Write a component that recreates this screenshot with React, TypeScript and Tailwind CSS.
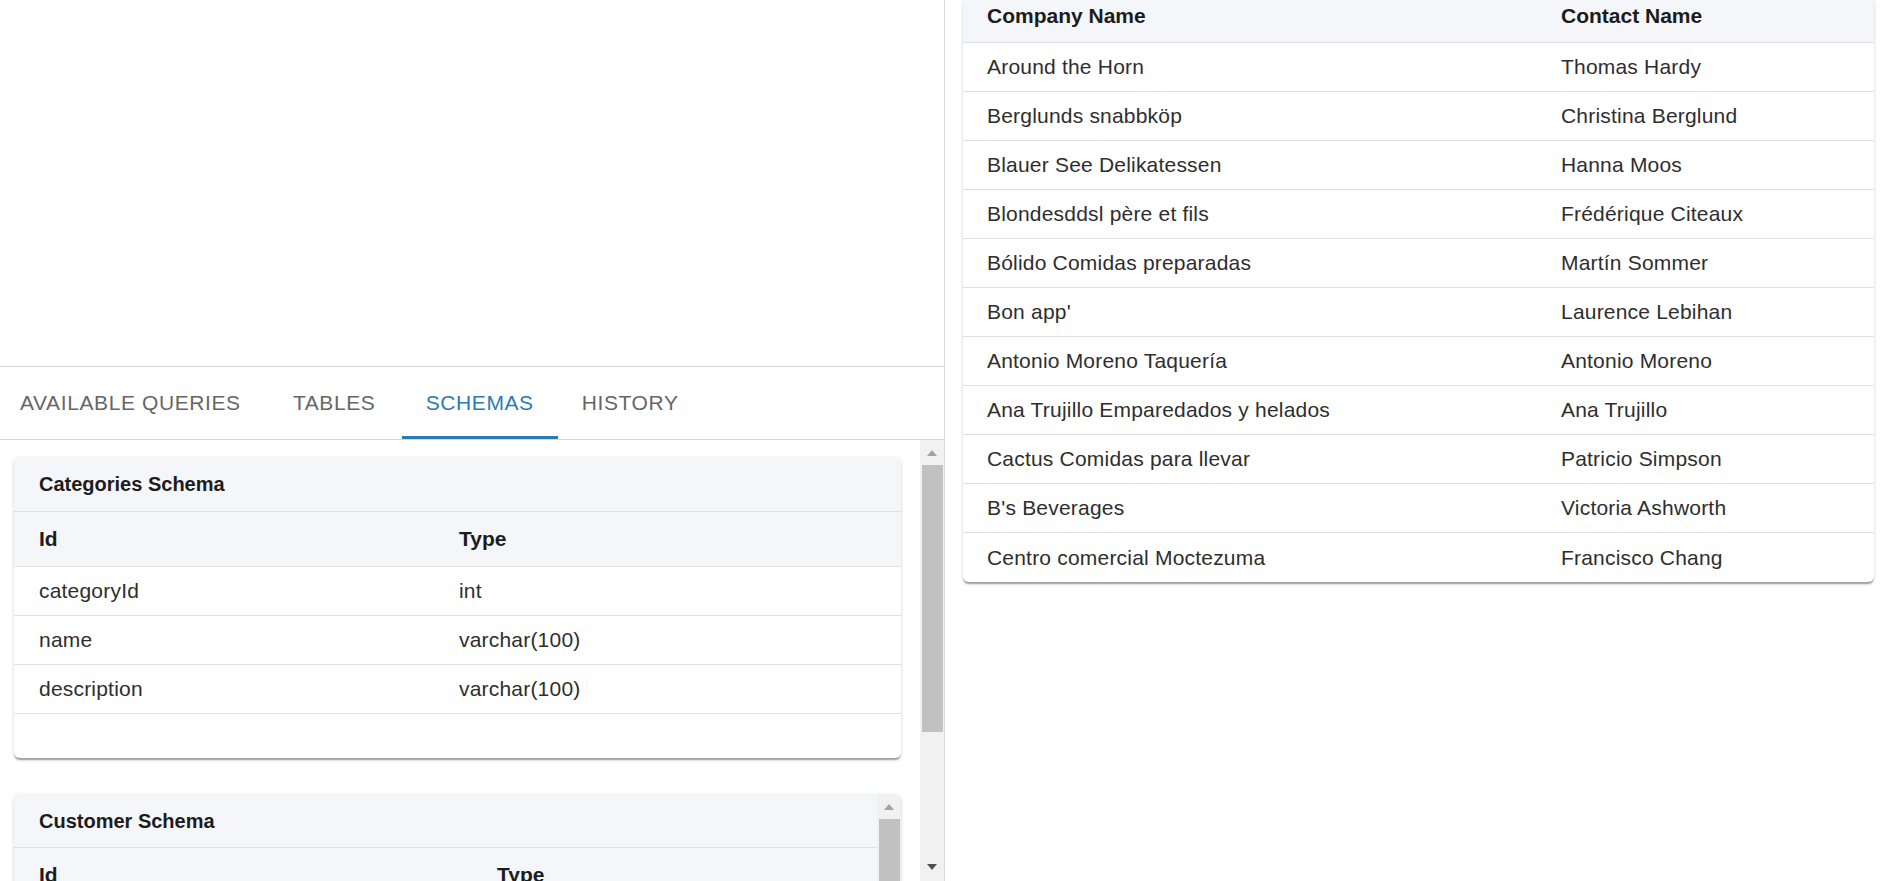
import React from "react"

const customers = [
  ["Around the Horn", "Thomas Hardy"],
  ["Berglunds snabbköp", "Christina Berglund"],
  ["Blauer See Delikatessen", "Hanna Moos"],
  ["Blondesddsl père et fils", "Frédérique Citeaux"],
  ["Bólido Comidas preparadas", "Martín Sommer"],
  ["Bon app'", "Laurence Lebihan"],
  ["Antonio Moreno Taquería", "Antonio Moreno"],
  ["Ana Trujillo Emparedados y helados", "Ana Trujillo"],
  ["Cactus Comidas para llevar", "Patricio Simpson"],
  ["B's Beverages", "Victoria Ashworth"],
  ["Centro comercial Moctezuma", "Francisco Chang"],
]

const categoryFields = [
  ["categoryId", "int"],
  ["name", "varchar(100)"],
  ["description", "varchar(100)"],
]

const tabs = [
  { label: "Available Queries", pad: "pl-[20px] pr-[26px]" },
  { label: "Tables", pad: "px-6" },
  { label: "Schemas", pad: "px-6" },
  { label: "History", pad: "px-6" },
]

function Arrow({ up, color }: { up?: boolean; color: string }) {
  return (
    <svg width="10" height="6" viewBox="0 0 10 6">
      <path d={up ? "M0 6 L5 0 L10 6 Z" : "M0 0 L10 0 L5 6 Z"} fill={color} />
    </svg>
  )
}

function Scrollbar({ thumb, downColor }: { thumb: string; downColor?: string }) {
  return (
    <div className="flex w-[24px] shrink-0 flex-col bg-[#f1f1f1]">
      <div className="flex h-[25px] shrink-0 items-center justify-center">
        <Arrow up color="#a3a3a3" />
      </div>
      <div className={`ml-[2px] mr-[1px] shrink-0 bg-[#c1c1c1] ${thumb}`} />
      <div className="flex-1" />
      {downColor && (
        <div className="flex h-[17px] shrink-0 items-start justify-center">
          <Arrow color={downColor} />
        </div>
      )}
    </div>
  )
}

export default function App() {
  return (
    <div className="flex h-[881px] w-full overflow-hidden bg-white font-['Liberation_Sans',Arial,sans-serif] text-[#2e2e2e]">
      {/* left side: editor area + tabs */}
      <div className="flex w-[945px] shrink-0 flex-col border-r border-[#dadada]">
        <div className="h-[367px] shrink-0 border-b border-[#d6d6d6]" />
        <div className="flex h-[73px] shrink-0 border-b border-[#d6d6d6]">
          {tabs.map((tab) => {
            const active = tab.label === "Schemas"
            return (
              <button
                key={tab.label}
                className={`flex h-full min-w-[135px] items-center justify-center border-b-[3px] pt-[3px] text-[21px] uppercase tracking-[0.6px] ${tab.pad} ${
                  active ? "border-[#2b7bb1] text-[#2b7bb1]" : "border-transparent text-[#666666]"
                }`}
              >
                {tab.label}
              </button>
            )
          })}
        </div>

        <div className="flex min-h-0 flex-1">
          <div className="flex min-w-0 flex-1 flex-col gap-[36px] overflow-hidden pl-[14px] pr-[19px] pt-[17px]">
            {/* Categories */}
            <div className="shrink-0 overflow-hidden rounded-[6px] bg-white shadow-[0_3px_1.5px_-1.5px_rgba(0,0,0,0.2),0_1.5px_1.5px_0_rgba(0,0,0,0.14),0_1.5px_4.5px_0_rgba(0,0,0,0.12)]">
              <div className="flex h-[55px] items-center border-b border-[#e0e0e0] bg-[#f5f6fa] pl-[25px] text-[20px] font-bold text-[#1c1c1c]">
                Categories Schema
              </div>
              <div className="grid h-[55px] grid-cols-[420px_1fr] items-center border-b border-[#e0e0e0] bg-[#f5f6fa] pl-[25px] text-[21px] font-bold text-[#1c1c1c]">
                <span>Id</span>
                <span>Type</span>
              </div>
              {categoryFields.map(([id, type]) => (
                <div key={id} className="grid h-[49px] grid-cols-[420px_1fr] items-center border-b border-[#e0e0e0] pl-[25px] text-[21px] tracking-[0.2px]">
                  <span>{id}</span>
                  <span>{type}</span>
                </div>
              ))}
              <div className="h-[44px]" />
            </div>

            {/* Customer */}
            <div className="flex h-[200px] shrink-0 overflow-hidden rounded-[6px] bg-white shadow-[0_3px_1.5px_-1.5px_rgba(0,0,0,0.2),0_1.5px_1.5px_0_rgba(0,0,0,0.14),0_1.5px_4.5px_0_rgba(0,0,0,0.12)]">
              <div className="min-w-0 flex-1">
                <div className="flex h-[54px] items-center border-b border-[#e0e0e0] bg-[#f5f6fa] pl-[25px] text-[20px] font-bold text-[#1c1c1c]">
                  Customer Schema
                </div>
                <div className="grid h-[55px] grid-cols-[458px_1fr] items-center border-b border-[#e0e0e0] bg-[#f5f6fa] pl-[25px] text-[21px] font-bold text-[#1c1c1c]">
                  <span>Id</span>
                  <span>Type</span>
                </div>
              </div>
              <Scrollbar thumb="h-[160px]" />
            </div>
          </div>
          <Scrollbar thumb="h-[267px]" downColor="#505050" />
        </div>
      </div>

      {/* right side: result table */}
      <div className="min-w-0 flex-1 pl-[18px] pr-[12px]">
        <div className="overflow-hidden rounded-b-[6px] bg-white shadow-[0_3px_1.5px_-1.5px_rgba(0,0,0,0.2),0_1.5px_1.5px_0_rgba(0,0,0,0.14),0_1.5px_4.5px_0_rgba(0,0,0,0.12)]">
          <div className="grid h-[43px] grid-cols-[574px_1fr] items-start border-b border-[#e0e0e0] bg-[#f5f6fa] pl-[24px] pt-[1px] text-[21px] font-bold leading-[30px] text-[#1c1c1c]">
            <span>Company Name</span>
            <span>Contact Name</span>
          </div>
          {customers.map(([company, contact], i) => (
            <div
              key={company}
              className={`grid h-[49px] grid-cols-[574px_1fr] items-center pl-[24px] text-[21px] tracking-[0.2px] ${
                i < customers.length - 1 ? "border-b border-[#e0e0e0]" : ""
              }`}
            >
              <span>{company}</span>
              <span>{contact}</span>
            </div>
          ))}
        </div>
      </div>
    </div>
  )
}
